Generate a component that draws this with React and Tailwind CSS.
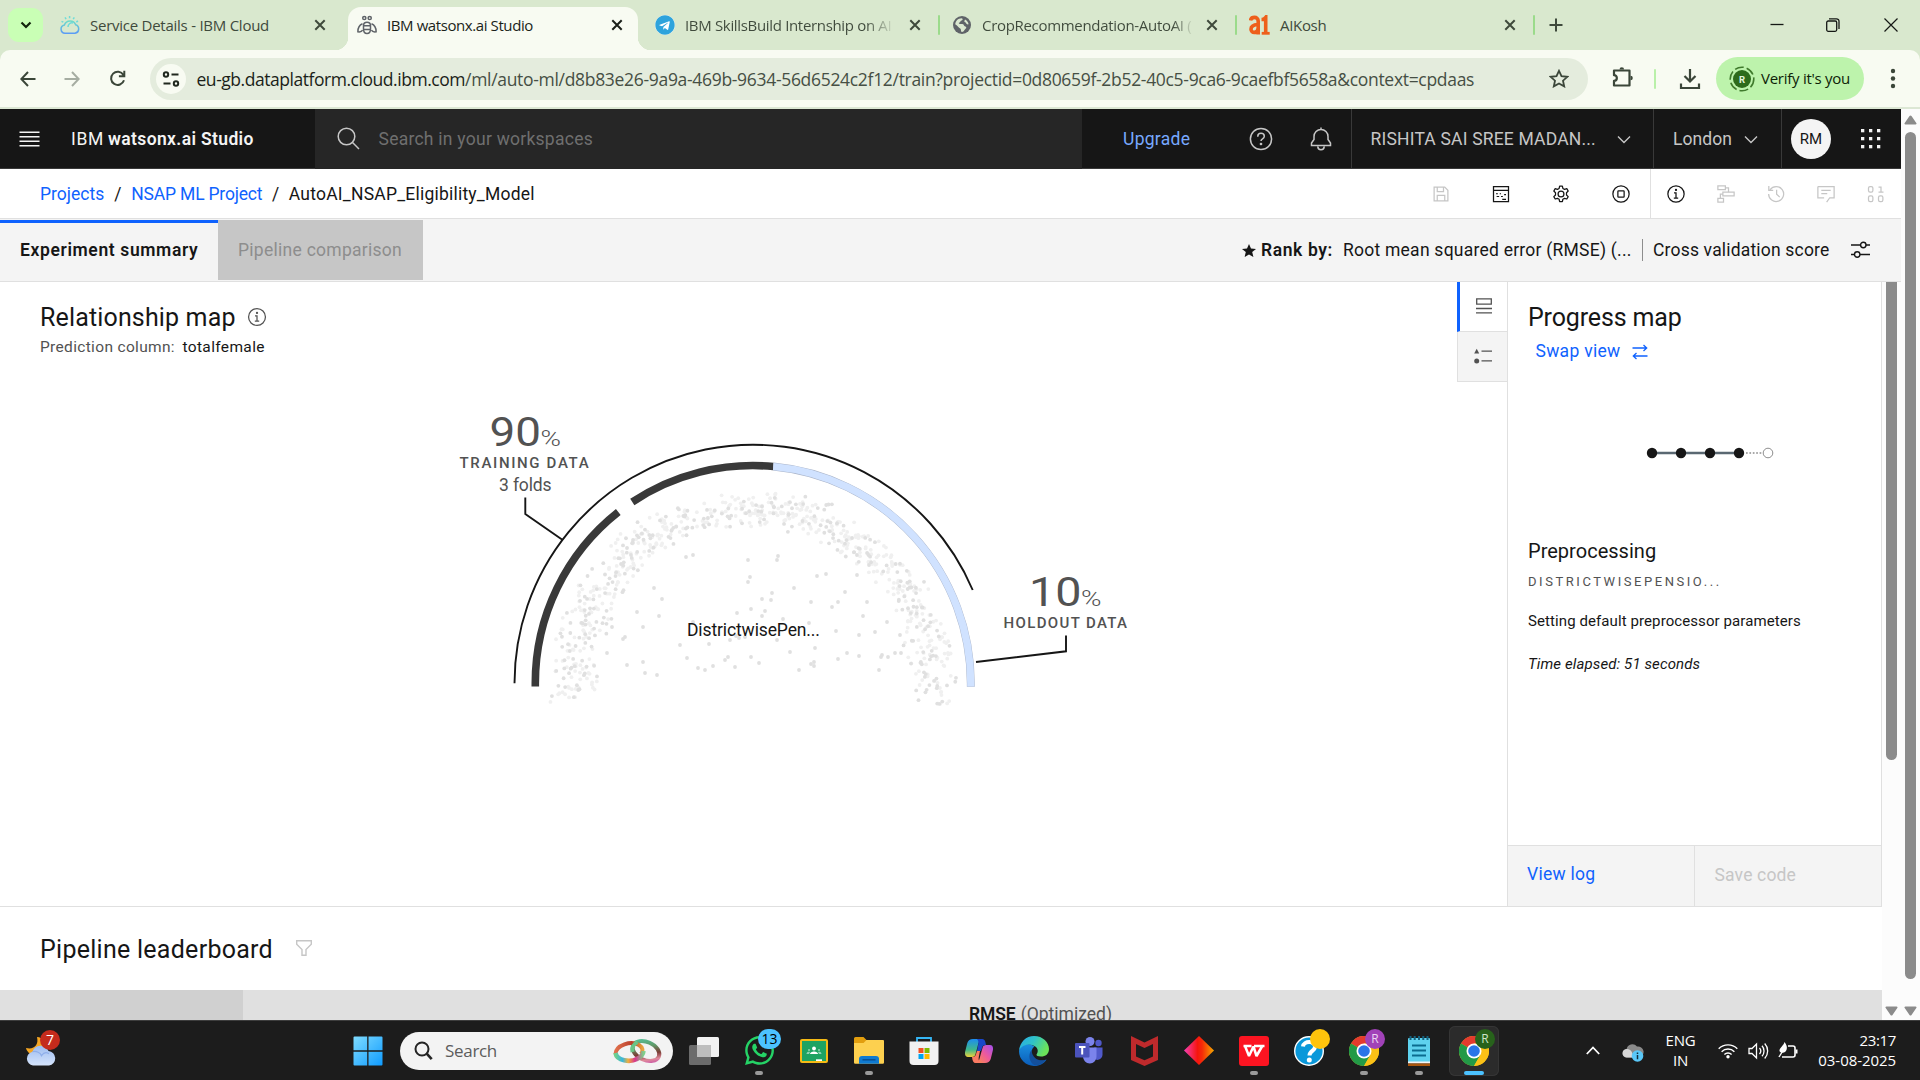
import React from 'react';
import { FaWhatsapp, FaTelegram } from 'react-icons/fa';

const PLEX = "font-['Roboto',sans-serif]";
const SEGOE = "font-['Open_Sans',sans-serif]";

/* ---------- shared helpers ---------- */

function Line({ size = 20, box = 32, w = 2, className = '', children }) {
  return (
    <svg width={size} height={size} viewBox={`0 0 ${box} ${box}`} fill="none" stroke="currentColor" strokeWidth={w} className={`shrink-0 ${className}`}>
      {children}
    </svg>
  );
}

const CloseX = () => (
  <svg width="20" height="20" viewBox="0 0 20 20" stroke="currentColor" strokeWidth="2" className="shrink-0">
    <path d="M5.3 5.3l9.4 9.4M14.7 5.3l-9.4 9.4" />
  </svg>
);

/* ---------- browser chrome ---------- */

const CloudFavicon = () => (
  <svg width="20" height="20" viewBox="0 0 20 20" fill="none" strokeWidth="1.5" className="shrink-0">
    <defs>
      <linearGradient id="cloudfav" x1="0" y1="0" x2="0" y2="1">
        <stop offset="0" stopColor="#6fdcc8" />
        <stop offset="1" stopColor="#5b9cf5" />
      </linearGradient>
    </defs>
    <path d="M5 18.3a4.2 4.2 0 0 1-.6-8.3 6 6 0 0 1 11.3-.2A4.4 4.4 0 0 1 15 18.3z" stroke="url(#cloudfav)" />
    <path d="M9.6 1v2.2M5 2.4l1.1 1.8M14.3 2.4l-1.1 1.8M1.5 6.3l1.8.9M18 6l-1.7 1M8 12a4 4 0 0 1 5-4" stroke="#6fdcd8" />
  </svg>
);

const BeeFavicon = () => (
  <svg width="20" height="20" viewBox="0 0 20 20" fill="none" stroke="#5f6368" strokeWidth="1.5" className="shrink-0">
    <circle cx="7.300" cy="3" r="1.600" />
    <circle cx="12.700" cy="3" r="1.600" />
    <path d="M6.500 10.500C6.500 6 13.500 6 13.500 10.500v3.500c0 6-7 6-7 0z" />
    <path d="M6.500 10.800h7M6.500 14.600h7" />
    <path d="M5.500 8.700C2.500 10 .8 12.500.9 16.800c2 .3 3.900-.2 4.700-1.600M14.500 8.700c3 1.300 4.700 3.800 4.600 8.100-2 .3-3.900-.2-4.700-1.600" />
  </svg>
);

const GlobeFavicon = () => (
  <svg width="18" height="18" viewBox="0 0 18 18" className="shrink-0">
    <circle cx="9" cy="9" r="9" fill="#5f6368" />
    <path d="M8.500 2.200c2 .6 1 2.300-.4 2.500-.9.1-.4 1.500-1.500 1.700C5.200 6.700 5.700 8 7.300 7.900c2-.1 3.600.1 3.700 1.600.1 1.200 2.300.6 2.300 2.100 0 1.200-1.300 1.500-2 2.600-.6 1-1.500 2-2.600 1.700C7.400 15.500 8.600 13.500 7.300 12.500 5.500 11.500 5 10.300 2.200 8.300 2.500 5 5 2.200 8.500 2.200z" fill="#dbe8d0" />
    <path d="M12 3.500c1.800 1 3.300 2.600 3.600 4.800-1.200.3-2.300-.2-2.400-1.100-.1-1-1.800-.9-1.900-2z" fill="#dbe8d0" />
  </svg>
);

const AiFavicon = () => (
  <svg width="21" height="20" viewBox="0 0 21 20" fill="none" stroke="#ee5f1b" strokeWidth="3.600" className="shrink-0">
    <path d="M1.500 5.500C2 1.500 9.200 1 9.200 6v13.500M9 9.500C4 9.800 2 11.500 2 14.200c0 4.300 6.500 4.300 7-.2" />
    <path d="M12.500 4.500c2 0 3-.8 4.200-2.200v15.500" />
    <path d="M12.700 18.300h8" strokeWidth="2.800" />
  </svg>
);

function TabStrip() {
  return (
    <div className={`flex h-[50px] items-center bg-[#d9e8ce] text-[15px] text-[#3f4a3c] ${SEGOE}`}>
      <button className="ml-2 flex h-[34px] w-[35px] items-center justify-center rounded-[11px] bg-[#c9ffb5] text-[#12240c]">
        <svg width="12" height="8" viewBox="0 0 12 8" fill="none" stroke="currentColor" strokeWidth="2.200"><path d="M1.500 1.500L6 6l4.500-4.500" /></svg>
      </button>
      <div className="flex w-[305px] items-center pl-[17px]">
        <CloudFavicon />
        <span className="ml-[10px] w-[220px] whitespace-nowrap tracking-[-0.250px]">Service Details - IBM Cloud</span>
        <CloseX />
      </div>
      <div className="relative mt-[7px] flex h-[43px] w-[290px] items-center rounded-t-[13px] bg-[#f8fbf2] pb-[7px] pl-[9px] text-[#1b1f19]">
        <span className="absolute bottom-0 -left-[13px] size-[13px] bg-[radial-gradient(circle_at_0_0,transparent_13px,#f8fbf2_13.500px)]" />
        <span className="absolute bottom-0 -right-[13px] size-[13px] bg-[radial-gradient(circle_at_100%_0,transparent_13px,#f8fbf2_13.500px)]" />
        <BeeFavicon />
        <span className="ml-[10px] w-[220px] whitespace-nowrap tracking-[-0.410px]">IBM watsonx.ai Studio</span>
        <CloseX />
      </div>
      <div className="flex w-[300px] items-center pl-[17px]">
        <span className="relative flex size-5 items-center justify-center rounded-full bg-white"><FaTelegram className="size-5 text-[#2ea3dc]" /></span>
        <span className="ml-[10px] w-[210px] bg-gradient-to-r from-[#3f4a3c] from-86% to-[#3f4a3c00] bg-clip-text whitespace-nowrap text-transparent tracking-[-0.330px]">IBM SkillsBuild Internship on AI</span>
        <span className="ml-[10px]"><CloseX /></span>
      </div>
      <div className="h-5 w-[2px] rounded bg-[#9bdb8b]" />
      <div className="flex w-[295px] items-center pl-[13px]">
        <GlobeFavicon />
        <span className="ml-[11px] w-[212px] bg-gradient-to-r from-[#3f4a3c] from-90% to-[#3f4a3c00] bg-clip-text whitespace-nowrap text-transparent tracking-[-0.310px]">CropRecommendation-AutoAI (</span>
        <span className="ml-[8px]"><CloseX /></span>
      </div>
      <div className="h-5 w-[2px] rounded bg-[#9bdb8b]" />
      <div className="flex w-[296px] items-center pl-[12px]">
        <AiFavicon />
        <span className="ml-[10px] w-[220px] tracking-[-0.320px]">AIKosh</span>
        <CloseX />
      </div>
      <div className="h-5 w-[2px] rounded bg-[#9bdb8b]" />
      <svg width="14" height="14" viewBox="0 0 14 14" stroke="currentColor" strokeWidth="2" className="ml-[14px]"><path d="M7 .5v13M.5 7h13" /></svg>
      <div className="ml-auto flex items-center pr-[22px] text-[#151815]">
        <svg width="14" height="14" viewBox="0 0 14 14" stroke="currentColor" strokeWidth="1.300"><path d="M0.500 6.500h13" /></svg>
        <svg width="14" height="14" viewBox="0 0 14 14" fill="none" stroke="currentColor" strokeWidth="1.300" className="ml-[42px]"><rect x=".7" y="3" width="10" height="10.300" rx="1.500" /><path d="M3 .8h7.500a2.500 2.500 0 0 1 2.500 2.500V11" /></svg>
        <svg width="14" height="14" viewBox="0 0 14 14" stroke="currentColor" strokeWidth="1.200" className="ml-[44px]"><path d="M.5.5l13 13M13.500.5l-13 13" /></svg>
      </div>
    </div>
  );
}

function AddressBar() {
  return (
    <div className="bg-[#d9e8ce]">
      <div className={`flex h-[59px] items-center rounded-t-[10px] border-b-2 border-[#dce7d4] bg-[#f8fbf2] text-[#3b4639] ${SEGOE}`}>
        <svg width="16" height="16" viewBox="0 0 16 16" fill="none" stroke="currentColor" strokeWidth="2" className="ml-5"><path d="M15.500 8H1.500M8 1L1.300 8 8 15" /></svg>
        <svg width="16" height="16" viewBox="0 0 16 16" fill="none" stroke="#a6ada2" strokeWidth="2" className="ml-[28px]"><path d="M.5 8h14M8 1l6.700 7L8 15" /></svg>
        <svg width="17" height="17" viewBox="0 0 17 17" fill="none" stroke="currentColor" strokeWidth="2" className="ml-[29px]"><path d="M15 10.300A6.600 6.600 0 1 1 14.400 5M15.300.8v5.400H9.900" /></svg>
        <div className="ml-[24px] flex h-[42px] w-[1438px] items-center rounded-full bg-[#e4ecdd] pl-[6px]">
          <span className="flex size-[30px] items-center justify-center rounded-full bg-[#f8fbf2] text-[#20281e]">
            <svg width="18" height="16" viewBox="0 0 18 16" fill="none" stroke="currentColor" strokeWidth="2"><circle cx="4" cy="3.500" r="2.200" /><path d="M9.500 3.500h7M1.500 12.500h7" /><circle cx="14" cy="12.500" r="2.200" /></svg>
          </span>
          <span className="ml-[10.500px] w-[1350px] pt-[2px] text-[17.500px] whitespace-nowrap text-[#464f44]">
            <span className="tracking-[-0.460px] text-[#1b1f19]">eu-gb.dataplatform.cloud.ibm.com</span>
            <span className="tracking-[-0.310px]">/ml/auto-ml/d8b83e26-9a9a-469b-9634-56d6524c2f12/train?projectid=0d80659f-2b52-40c5-9ca6-9caefbf5658a&amp;context=cpdaas</span>
          </span>
          <svg width="20" height="19" viewBox="0 0 20 19" fill="none" stroke="currentColor" strokeWidth="1.800" className="ml-[2px]"><path d="M10 1.800l2.500 5.300 5.800.7-4.300 3.900 1.200 5.700L10 14.500l-5.200 2.900L6 11.700 1.700 7.800l5.800-.7z" /></svg>
        </div>
        <svg width="22" height="22" viewBox="0 0 22 22" fill="none" stroke="currentColor" strokeWidth="2.200" className="-mt-1 ml-[24px]"><path d="M2 4.500h15.500v15H2v-4.700c3.800 0 3.800-5.600 0-5.600z" strokeLinejoin="round" /><path d="M7.500 3.500a2.300 2.300 0 0 1 4.600 0zM18.500 9.700a2.300 2.300 0 0 1 0 4.600z" fill="currentColor" stroke="none" /></svg>
        <div className="ml-[20px] h-5 w-[2px] rounded bg-[#b9f0a9]" />
        <svg width="22" height="22" viewBox="0 0 22 22" fill="none" stroke="currentColor" strokeWidth="2.200" className="ml-[23px]"><path d="M11 1v12M5.500 8l5.500 5.500L16.500 8M2 15.500V20h18v-4.500" /></svg>
        <div className="ml-[15px] flex h-[43px] w-[148px] items-center rounded-full bg-[#bdf3ac] pl-[12px] text-[15px] text-[#0d2207]">
          <svg width="28" height="28" viewBox="0 0 28 28"><circle cx="14" cy="14" r="11.800" fill="none" stroke="#3f7a2c" strokeWidth="1.600" strokeDasharray="9 3" /><circle cx="14" cy="14" r="9" fill="#2d6b1b" /><text x="14" y="17.500" textAnchor="middle" fontSize="9.500" fontWeight="700" fill="#e2f3db" fontFamily="Roboto">R</text></svg>
          <span className="ml-[5px] whitespace-nowrap tracking-[-0.260px]">Verify it's you</span>
        </div>
        <svg width="6" height="22" viewBox="0 0 6 22" fill="currentColor" className="ml-[26px]"><circle cx="3" cy="3" r="2.200" /><circle cx="3" cy="10.500" r="2.200" /><circle cx="3" cy="18" r="2.200" /></svg>
      </div>
    </div>
  );
}

/* ---------- IBM header ---------- */

const ChevronDown = () => (
  <svg width="14" height="9" viewBox="0 0 14 9" fill="none" stroke="currentColor" strokeWidth="1.400" className="shrink-0"><path d="M1 1.500l6 6 6-6" /></svg>
);

function Header() {
  return (
    <div className="flex h-[60px] items-stretch bg-[#161616] text-[17.500px] text-[#c6c6c6]">
      <div className="flex w-[315px] items-center border-b border-[#393939] pt-px pl-[19px] text-[#f4f4f4]">
        <svg width="21" height="16" viewBox="0 0 21 16" stroke="currentColor" strokeWidth="1.400"><path d="M.5 1.200h20M.5 5.700h20M.5 10.200h20M.5 14.700h20" /></svg>
        <span className="ml-[31px] pt-px tracking-[0.700px]">IBM</span>
        <span className="ml-[4px] pt-px font-semibold tracking-[0.360px]">watsonx.ai Studio</span>
      </div>
      <div className="flex w-[767px] items-center bg-[#262626] pl-[22px]">
        <svg width="23" height="23" viewBox="0 0 23 23" fill="none" stroke="currentColor" strokeWidth="1.500" className="-mt-[2px]"><circle cx="9.500" cy="9.500" r="8.300" /><path d="M15.300 15.300l6.700 6.700" /></svg>
        <span className="ml-[18.500px] tracking-[0.250px] text-[#6f6f6f]">Search in your workspaces</span>
      </div>
      <div className="flex w-[270px] items-center border-r border-b border-[#393939]">
        <span className="ml-[41px] w-[68px] pt-[2px] tracking-[0.280px] text-[#78a9ff]">Upgrade</span>
        <svg width="24" height="24" viewBox="0 0 24 24" fill="none" stroke="currentColor" strokeWidth="1.500" className="ml-[57.500px]"><circle cx="12" cy="12" r="10.600" /><path d="M8.800 9.800V9.300c0-1.700 1.200-3 3.200-3s3.300 1.100 3.300 2.900c0 2.800-3.300 2.300-3.300 4.800" /><circle cx="12" cy="17" r=".6" fill="currentColor" /></svg>
        <svg width="22" height="24" viewBox="0 0 22 24" fill="none" stroke="currentColor" strokeWidth="1.500" className="ml-[37px]"><path d="M11 .5v2.500M1.500 18.500h19V16l-2.500-3.500V9.500a7 7 0 0 0-14 0v3L1.500 16zM7.800 19.500a3.200 3.200 0 0 0 6.400 0" /></svg>
      </div>
      <div className="flex w-[302px] items-center border-r border-b border-[#393939] pt-[2px] pl-[18.500px]">
        <span className="w-[246px] whitespace-nowrap tracking-[0.190px]">RISHITA SAI SREE MADAN...</span>
        <ChevronDown />
      </div>
      <div className="flex w-[128px] items-center border-r border-b border-[#393939] pt-[2px] pl-[19px]">
        <span className="w-[71px] tracking-[0.060px]">London</span>
        <ChevronDown />
      </div>
      <div className="flex w-[119px] items-center border-b border-[#393939] pl-[9px]">
        <span className="flex size-10 items-center justify-center rounded-full bg-[#f4f4f4] pt-px text-[15px] text-[#161616]">RM</span>
        <svg width="20" height="20" viewBox="0 0 20 20" fill="#f4f4f4" className="ml-[30px]">
          {[0, 8, 16].map((y) => [0, 8, 16].map((x) => <rect key={`${x}-${y}`} x={x} y={y} width="3.300" height="3.300" />))}
        </svg>
      </div>
    </div>
  );
}

/* ---------- breadcrumb ---------- */

function ToolCell({ wide, dim, children }) {
  return (
    <span className={`flex h-full items-center justify-center ${wide ? 'w-[60px] pl-[2px]' : 'w-[50px]'} ${dim ? 'text-[#c6c6c6]' : 'text-[#161616]'}`}>
      {children}
    </span>
  );
}

function Breadcrumb() {
  return (
    <div className="flex h-[50px] items-center border-b border-[#e0e0e0] bg-white pl-10 text-[17.500px] text-[#161616]">
      <div className="flex pt-[2px]">
        <span className="tracking-[0.020px] text-[#0f62fe]">Projects</span>
        <span className="w-[27px] text-center">/</span>
        <span className="tracking-[-0.190px] text-[#0f62fe]">NSAP ML Project</span>
        <span className="w-[26.500px] text-center">/</span>
        <span className="tracking-[0.220px]">AutoAI_NSAP_Eligibility_Model</span>
      </div>
      <div className="ml-auto flex h-full items-center pt-px">
        <ToolCell wide dim>
          <Line><path d="M5 5h17l5 5v17H5zM10 5v7h10V5M10 27v-9h12v9" /></Line>
        </ToolCell>
        <ToolCell wide>
          <Line><path d="M4 4h24v24H4zM4 10h24" /><path d="M8 15.500h3M14 15.500h2M9 20h4M16 20h3M18 24.500h6M21 17h3" strokeWidth="1.800" /></Line>
        </ToolCell>
        <ToolCell wide>
          <Line>
            <circle cx="16" cy="16" r="4.700" />
            <path d="M13.800 3.500h4.400l.8 3.600 2.700 1.500 3.600-1.100 2.200 3.800-2.700 2.600v3.700l2.700 2.600-2.200 3.800-3.600-1.100-2.700 1.500-.8 3.600h-4.400l-.8-3.600-2.700-1.500-3.600 1.100-2.200-3.800 2.700-2.600v-3.700l-2.700-2.600 2.200-3.800 3.600 1.100L13 7.100z" strokeLinejoin="round" />
          </Line>
        </ToolCell>
        <ToolCell wide>
          <Line><circle cx="16" cy="16" r="13" /><rect x="11" y="11" width="10" height="10" rx="1" /></Line>
        </ToolCell>
        <span className="-mt-px h-[50px] w-px bg-[#e0e0e0]" />
        <ToolCell>
          <Line><circle cx="16" cy="16" r="13" /><path d="M12.500 22.500h7M16 22.500v-8.300h-3.200" /><circle cx="16" cy="9.500" r=".8" fill="currentColor" /></Line>
        </ToolCell>
        <ToolCell dim>
          <Line><rect x="3" y="3" width="12" height="6" /><rect x="11" y="13" width="18" height="6" /><rect x="3" y="23" width="9" height="6" /><path d="M15 6h5v7M7 23v-7h4" /></Line>
        </ToolCell>
        <ToolCell dim>
          <Line><path d="M6.500 9a12 12 0 1 1-2.300 7M4.500 3v7h7M17 9v7.500l5 4.500" /></Line>
        </ToolCell>
        <ToolCell dim>
          <Line><path d="M3 4h26v18h-7l-5 7M3 4v18h10M8.500 10h15M8.500 15.500h9.500" /></Line>
        </ToolCell>
        <ToolCell dim>
          <Line><rect x="4" y="4" width="7" height="9" rx="2.500" /><path d="M20 5h4v8M20 13h8" /><rect x="4" y="19" width="7" height="9" rx="2.500" /><rect x="20" y="19" width="7" height="9" rx="2.500" /></Line>
        </ToolCell>
      </div>
    </div>
  );
}

function ViewTabs() {
  return (
    <div className="flex h-[63px] items-center border-b border-[#e0e0e0] bg-[#f4f4f4] text-[17.500px] text-[#161616]">
      <div className="mt-px flex h-[60px] w-[218px] items-center self-start border-t-[3px] border-[#0f62fe] pb-[3px] pl-5 font-semibold tracking-[0.620px]">Experiment summary</div>
      <div className="mt-px flex h-[60px] w-[204.500px] items-center self-start bg-[#c6c6c6] pl-5 tracking-[0.270px] text-[#8d8d8d]">Pipeline comparison</div>
      <div className="ml-auto flex items-center whitespace-nowrap pr-[31.500px]">
        <svg width="14" height="13" viewBox="0 0 14 13" fill="#161616"><path d="M7 0l2 4.500 5 .4-3.800 3.200L11.400 13 7 10.400 2.600 13l1.200-4.900L0 4.900l5-.4z" /></svg>
        <span className="ml-[5px] w-[82px] font-semibold tracking-[0.600px]">Rank by:</span>
        <span className="w-[299px] tracking-[0.240px]">Root mean squared error (RMSE) (...</span>
        <span className="h-[22px] w-px bg-[#8d8d8d]" />
        <span className="ml-[10px] w-[197.500px] tracking-[0.180px]">Cross validation score</span>
        <svg width="19" height="18" viewBox="0 0 19 18" fill="none" stroke="currentColor" strokeWidth="1.400"><path d="M0 4h9.500M15 4h4M0 13.500h3.500M9 13.500h10" /><circle cx="12.300" cy="4" r="2.700" /><circle cx="6.200" cy="13.500" r="2.700" /></svg>
      </div>
    </div>
  );
}

/* ---------- relationship map ---------- */

function seeded(seed) {
  let s = seed;
  return () => {
    s = (s + 0x6d2b79f5) | 0;
    let t = Math.imul(s ^ (s >>> 15), 1 | s);
    t = (t + Math.imul(t ^ (t >>> 7), 61 | t)) ^ t;
    return ((t ^ (t >>> 14)) >>> 0) / 4294967296;
  };
}

const CX = 753;
const CY = 683.3;

/* Dots fill a half ring that widens towards both feet of the arc. */
function bandDots(count, seed) {
  const rnd = seeded(seed);
  return Array.from({ length: count }, () => {
    const a = Math.PI * (1.035 - rnd() * 1.07);
    const edge = Math.abs(Math.cos(a));
    const outer = 193 + 13 * edge;
    const inner = 155 - 2 * edge;
    const r = inner + (outer - inner) * (rnd() * 0.6 + rnd() * 0.4);
    return [CX + r * Math.cos(a), CY - r * Math.sin(a)];
  });
}

const LIGHT = bandDots(470, 17);
const MID = bandDots(270, 93);

const INNER = [
  [686, 557], [693, 555], [748, 560], [778, 556], [777, 560], [750, 577], [748, 582], [654, 588], [662, 599], [772, 593], [762, 599], [771, 600],
  [751, 609], [765, 611], [762, 616], [737, 613], [659, 616], [637, 612], [693, 622], [783, 619], [643, 627], [680, 645], [709, 644], [687, 658],
  [725, 660], [728, 657], [751, 657], [759, 663], [735, 667], [713, 666], [705, 670], [698, 668], [657, 675], [645, 673], [643, 662], [627, 665],
  [607, 653], [623, 639], [625, 637], [612, 627], [794, 588], [817, 576], [826, 574], [811, 602], [832, 607], [809, 623], [815, 648], [790, 652],
  [777, 640], [799, 670], [811, 664], [814, 662], [814, 666], [730, 640], [736, 636], [739, 638], [745, 637], [845, 592], [838, 602], [867, 602],
  [863, 616], [857, 575], [869, 565], [836, 631], [859, 635], [875, 632], [887, 622], [900, 635], [838, 659], [847, 653], [859, 656], [882, 655],
  [881, 657], [888, 657], [895, 653], [901, 653], [879, 670],
];

function RelationshipChart() {
  return (
    <svg width="1457" height="350" viewBox="0 390 1457 350" className={`block ${PLEX}`} fill="#525252">
      <g fill="#f0f0f0">{LIGHT.map(([x, y], i) => <circle key={i} cx={x} cy={y} r="1.900" />)}</g>
      <g fill="#e0e0e0">{MID.map(([x, y], i) => <circle key={i} cx={x} cy={y} r="1.900" />)}</g>
      <g fill="#e0e0e0">{INNER.map(([x, y], i) => <circle key={i} cx={x} cy={y} r="1.900" />)}</g>
      <g fill="none">
        <path d="M514.500 683.300A238.600 238.600 0 0 1 972.700 590" stroke="#161616" strokeWidth="1.900" />
        <path d="M535.300 686.500V683.300A217.800 217.800 0 0 1 618.300 512" stroke="#393939" strokeWidth="7.600" />
        <path d="M632.300 502A217.800 217.800 0 0 1 773.300 466.500" stroke="#393939" strokeWidth="7.600" />
        <path d="M773.300 466.500A217.800 217.800 0 0 1 970.800 683.300V686.800" stroke="#a9b4c9" strokeWidth="7.900" />
        <path d="M773.300 466.500A217.800 217.800 0 0 1 970.800 683.300V686.500" stroke="#d0e2ff" strokeWidth="7.200" />
        <path d="M525.300 497.500V514L562.700 540" stroke="#161616" strokeWidth="1.900" />
        <path d="M1066 635.500V651.300L976 662" stroke="#161616" strokeWidth="1.900" />
      </g>
      <text x="489.500" y="446" fontSize="41.500" textLength="51.500" lengthAdjust="spacingAndGlyphs">90</text>
      <text x="540.500" y="446" fontSize="21.500" fontWeight="300" textLength="20.500" lengthAdjust="spacingAndGlyphs">%</text>
      <text x="459.500" y="468.300" fontSize="15" fontWeight="500" letterSpacing="1.650">TRAINING DATA</text>
      <text x="499" y="490.700" fontSize="17.500" letterSpacing="-0.150">3 folds</text>
      <text x="687" y="636" fontSize="17.500" letterSpacing="-0.120" fill="#161616">DistrictwisePen...</text>
      <text x="1029" y="605.700" fontSize="41.500" textLength="52.500" lengthAdjust="spacingAndGlyphs">10</text>
      <text x="1081" y="605.700" fontSize="21.500" fontWeight="300" textLength="20.500" lengthAdjust="spacingAndGlyphs">%</text>
      <text x="1003.500" y="628.300" fontSize="15" fontWeight="500" letterSpacing="1.360">HOLDOUT DATA</text>
    </svg>
  );
}

function RelationshipPanel() {
  return (
    <div className="w-[1457px]">
      <div className="flex h-[70px] items-center pt-[2px] pl-10 text-[25px] tracking-[0.150px] text-[#161616]">
        Relationship map
        <Line size={20} w={2} className="-mt-[2px] ml-[11px] text-[#525252]"><circle cx="16" cy="16" r="13.500" /><path d="M12.500 22.500h7M16 22.500v-8.300h-3.200" /><circle cx="16" cy="9.500" r=".8" fill="currentColor" /></Line>
      </div>
      <div className="-mt-[14px] mb-[32px] flex h-5 items-center pl-10 text-[15.500px]">
        <span className="tracking-[0.330px] text-[#525252]">Prediction column:</span>
        <span className="ml-[7.500px] tracking-[0.360px] text-[#161616]">totalfemale</span>
      </div>
      <RelationshipChart />
    </div>
  );
}

function SideTabs() {
  return (
    <div className="flex w-[50px] flex-col">
      <div className="flex h-[50px] items-center justify-center border-b border-l-[3px] border-[#e0e0e0] border-l-[#0f62fe] pb-[2px] pl-px text-[#525252]">
        <svg width="16" height="16" viewBox="0 0 16 16" fill="none" stroke="currentColor" strokeWidth="1.300"><path d="M.7.9h14.600v5.200H.7zM0 10.500h16M0 14.800h16" /></svg>
      </div>
      <div className="flex h-[50px] items-center justify-center border-b border-l border-[#e0e0e0] bg-[#f4f4f4] pb-px pl-px text-[#525252]">
        <svg width="18" height="16" viewBox="0 0 18 16" fill="currentColor"><path d="M2.700.7L5.200 5.500H.2z" /><circle cx="2.700" cy="13" r="2.500" /><path d="M7.500 2.500H18v1.300H7.500zM7.500 12.300H18v1.300H7.500z" /></svg>
      </div>
    </div>
  );
}

function ProgressPanel() {
  return (
    <div className="flex w-[375px] flex-col border-x border-[#e0e0e0] text-[#161616]">
      <div className="flex flex-1 flex-col pl-5">
        <div className="mt-[21px] h-[30px] text-[25px] leading-[30px] tracking-[-0.150px]">Progress map</div>
        <div className="mt-[6px] flex h-6 items-center pl-[7.500px] text-[17.500px] text-[#0f62fe]">
          <span className="w-[96px] tracking-[0.290px]">Swap view</span>
          <svg width="16" height="16" viewBox="0 0 16 16" fill="none" stroke="currentColor" strokeWidth="1.300" className="mt-[2px]"><path d="M.5 4h14M11.500 1l3.200 3-3.200 3M15.500 12h-14M4.500 9l-3.200 3 3.200 3" /></svg>
        </div>
        <svg width="130" height="12" viewBox="0 0 130 12" className="mt-[84px] ml-[118px]">
          <path d="M7 6h87" stroke="#5a6872" strokeWidth="2.600" />
          <path d="M100 6h17" stroke="#8d8d8d" strokeWidth="1.600" strokeDasharray="1.700 1.700" />
          {[6, 35, 64, 93].map((x) => <circle key={x} cx={x} cy="6" r="5.200" fill="#161616" />)}
          <circle cx="122" cy="6" r="4.800" fill="#fff" stroke="#8d8d8d" strokeWidth="1" />
        </svg>
        <div className="mt-[79px] h-[26px] text-[20px] leading-[26px] tracking-[0.020px]">Preprocessing</div>
        <div className="mt-[8px] h-5 text-[13px] leading-5 tracking-[2.550px] text-[#525252]">DISTRICTWISEPENSIO...</div>
        <div className="mt-[19px] h-5 text-[15px] leading-5 tracking-[0.090px]">Setting default preprocessor parameters</div>
        <div className="mt-[23px] h-5 text-[15px] leading-5 tracking-[0.120px] italic">Time elapsed: 51 seconds</div>
      </div>
      <div className="flex h-[61px] border-t border-[#e0e0e0] bg-[#f4f4f4] text-[17.500px]">
        <div className="flex w-[187px] items-center border-r border-[#e0e0e0] pb-[3px] pl-[19px] tracking-[0.260px] text-[#0f62fe]">View log</div>
        <div className="flex flex-1 items-center pb-[1px] pl-[19.500px] tracking-[0.160px] text-[#c6c6c6]">Save code</div>
      </div>
    </div>
  );
}

function Leaderboard() {
  return (
    <div>
      <div className="flex h-[83px] items-center pt-[2px] pl-10 text-[25px] tracking-[0.270px] text-[#161616]">
        Pipeline leaderboard
        <svg width="16" height="16" viewBox="0 0 16 16" fill="none" stroke="#c6c6c6" strokeWidth="1.400" className="-mt-[3px] ml-[23px]"><path d="M.7.7h14.600v3.600L10 9.500v5.800H6V9.500L.7 4.300z" /></svg>
      </div>
      <div className="flex h-[30px] overflow-hidden bg-[#e0e0e0] text-[17.500px]">
        <div className="ml-[70px] w-[173px] bg-[#d0d0d0]" />
        <div className="mt-[14px] ml-[726px] leading-5 whitespace-nowrap">
          <span className="font-semibold tracking-[-0.080px] text-[#161616]">RMSE</span>
          <span className="ml-[5px] tracking-[0.020px] text-[#525252]">(Optimized)</span>
        </div>
      </div>
    </div>
  );
}

const ArrowDown = () => <svg width="13" height="10" viewBox="0 0 13 10" fill="#8b8b8b"><path d="M1.500.5h10c1 0 1.300.8.8 1.500L7.500 9c-.6.7-1.400.7-2 0L.7 2C.2 1.300.5.5 1.500.5z" /></svg>;
const ArrowUp = () => <svg width="13" height="10" viewBox="0 0 13 10" fill="#8b8b8b"><path d="M1.500 9.500h10c1 0 1.300-.8.8-1.500L7.500 1c-.6-.7-1.400-.7-2 0L.7 8c-.5.7-.2 1.500.8 1.500z" /></svg>;

/* ---------- taskbar ---------- */

function Badge({ className, children }) {
  return <span className={`absolute flex items-center justify-center rounded-full ${className}`}>{children}</span>;
}

const ChromeIcon = () => (
  <svg width="30" height="30" viewBox="0 0 30 30">
    <circle cx="15" cy="15" r="15" fill="#fbc116" />
    <path d="M15 15L2 7.500A15 15 0 0 1 28 7.500H15z" fill="#e33b2e" />
    <path d="M15 15L2 7.500A15 15 0 0 0 15 30l6.500-11.200z" fill="#229a47" />
    <path d="M15 7.500h13A15 15 0 0 1 15 30l6.500-11.200z" fill="#fbc116" />
    <circle cx="15" cy="15" r="7.500" fill="#fff" />
    <circle cx="15" cy="15" r="5.800" fill="#2a75e8" />
  </svg>
);

function TaskItem({ dot, active, children }) {
  return (
    <div className={`relative mx-[2.500px] flex size-[50px] items-center justify-center rounded-md ${active ? 'bg-[#2b2b2b] ring-1 ring-[#353535] ring-inset' : ''}`}>
      {children}
      {dot && <span className="absolute bottom-[1px] left-[21px] h-1 w-2 rounded-full bg-[#9a9a9a]" />}
      {active && <span className="absolute bottom-[1px] left-[15px] h-1 w-5 rounded-full bg-[#4cc2ff]" />}
    </div>
  );
}

function KnotArt() {
  return (
    <svg width="50" height="28" viewBox="0 0 50 28" fill="none">
      <defs>
        <linearGradient id="knotTop" x1="0" y1="0" x2="1" y2="0">
          <stop offset="0" stopColor="#e0704c" /><stop offset=".6" stopColor="#b93f2c" /><stop offset="1" stopColor="#e9a23e" />
        </linearGradient>
        <linearGradient id="knotLow" x1="0" y1="0" x2="1" y2="0">
          <stop offset="0" stopColor="#6fd08c" /><stop offset=".25" stopColor="#38b6dd" /><stop offset=".45" stopColor="#f0b03c" /><stop offset=".7" stopColor="#d8348c" /><stop offset="1" stopColor="#7fcf8a" />
        </linearGradient>
        <linearGradient id="knotRight" x1="0" y1="0" x2="1" y2="1">
          <stop offset="0" stopColor="#54c8a4" /><stop offset=".35" stopColor="#5f9a68" /><stop offset=".6" stopColor="#7a3c34" /><stop offset=".8" stopColor="#e08a9b" /><stop offset="1" stopColor="#c03fae" />
        </linearGradient>
      </defs>
      <ellipse cx="33" cy="14" rx="14" ry="9" transform="rotate(24 33 14)" stroke="url(#knotRight)" strokeWidth="4" />
      <path d="M2.500 17C3 8 18 3.500 26 8c4 2.500 4.500 6 2 9" stroke="url(#knotTop)" strokeWidth="4" />
      <path d="M2.500 16C4 24 17 25.500 24 22c4-2 6-4 6.500-8" stroke="url(#knotLow)" strokeWidth="4.600" />
      <path d="M19.500 15c-1-4 1-8 5-10" stroke="#6ac487" strokeWidth="4" />
    </svg>
  );
}

function Taskbar() {
  return (
    <div className={`flex h-[60px] items-center border-t border-[#3d3d3d] bg-[#1c1c1c] text-[15px] text-white ${SEGOE}`}>
      <div className="relative ml-[26px] h-[30px] w-[40px]">
        <svg width="30" height="30" viewBox="0 0 30 30">
          <defs><linearGradient id="wx" x1="0" y1="0" x2="0" y2="1"><stop offset="0" stopColor="#9dbcf0" /><stop offset="1" stopColor="#d5e4fb" /></linearGradient></defs>
          <path d="M11 1c2 8-3 13-11 11 2 8 12 10 18 3V6c-1-3-4-5-7-5z" fill="#f5a623" />
          <path d="M7 29.500a7 7 0 0 1-.5-13.800A8.500 8.500 0 0 1 22.500 15 7.300 7.300 0 0 1 23 29.500z" fill="url(#wx)" />
          <path d="M6.500 15.700c4-1 8 1 9 4 2-3 5-3.500 7.500-2" fill="none" stroke="#8eaeea" strokeWidth="1.200" />
        </svg>
        <Badge className="-top-[6px] left-[14px] size-5 bg-[#c42b1c] text-[14px]">7</Badge>
      </div>
      <svg width="30" height="30" viewBox="0 0 30 30" className="ml-[286.500px]">
        <defs><linearGradient id="win" x1="0" y1="0" x2="1" y2="1"><stop offset="0" stopColor="#7fdcff" /><stop offset="1" stopColor="#0f9bff" /></linearGradient></defs>
        <path d="M.5 1.500a1 1 0 0 1 1-1h12.700v13.700H.5zM15.500.5h13a1 1 0 0 1 1 1v12.700h-14zM.5 15.700h13.700v13.800H1.500a1 1 0 0 1-1-1zM15.500 15.700h14v12.800a1 1 0 0 1-1 1h-13z" fill="url(#win)" />
      </svg>
      <div className="ml-[17.500px] flex h-[38px] w-[273px] items-center rounded-full bg-[#f3f3f3] pl-[14px] text-[#5c5c5c]">
        <svg width="19" height="20" viewBox="0 0 19 20" fill="none" stroke="#242424" strokeWidth="2"><circle cx="8" cy="8" r="6.500" /><path d="M12.700 12.700l5 5.500" strokeWidth="2.600" /></svg>
        <span className="ml-[12px] text-[17px] tracking-[-0.310px]">Search</span>
        <span className="ml-auto pr-[10px]"><KnotArt /></span>
      </div>
      <div className="ml-[3.500px] flex items-center">
        <TaskItem>
          <svg width="30" height="28" viewBox="0 0 30 28"><rect y="8" width="22" height="20" rx="1.500" fill="#6b6b6b" /><rect x="8" width="22" height="20" rx="1.500" fill="#f2f2f2" /><path d="M8 8h14v12H9.500A1.500 1.500 0 0 1 8 18.500z" fill="#bdbdbd" /></svg>
        </TaskItem>
        <TaskItem dot>
          <FaWhatsapp className="size-[33px] text-[#25d366]" />
          <Badge className="top-[3px] left-[24px] h-5 w-[23px] bg-[#4cc2ff] text-[14px] text-black">13</Badge>
        </TaskItem>
        <TaskItem>
          <svg width="28" height="24" viewBox="0 0 28 24"><rect width="28" height="24" rx="2" fill="#f5ba15" /><rect x="2" y="2" width="24" height="20" fill="#1da362" /><circle cx="14" cy="9.500" r="1.900" fill="#fff" /><path d="M10 15c0-3.500 8-3.500 8 0z" fill="#fff" /><path d="M6.500 15c0-2.500 2.500-2.500 3.500-2l-1 2zM21.500 15c0-2.500-2.500-2.500-3.500-2l1 2z" fill="#8fd3b3" /><circle cx="9" cy="11" r="1" fill="#8fd3b3" /><circle cx="19" cy="11" r="1" fill="#8fd3b3" /><path d="M16 20.300h6v1.700h-6z" fill="#fff" /></svg>
        </TaskItem>
        <TaskItem dot>
          <svg width="30" height="27" viewBox="0 0 30 27"><path d="M0 1.500A1.500 1.500 0 0 1 1.500 0h8l3 3H29v10H0z" fill="#e29e0e" /><path d="M0 6h9.500l3-3H29a1 1 0 0 1 1 1v21.500a1.200 1.200 0 0 1-1.200 1.200H1.200A1.200 1.200 0 0 1 0 25.500z" fill="#fdd04f" /><path d="M5 22a3 3 0 0 1 3-3h14a3 3 0 0 1 3 3v4.700H5z" fill="#0f7ad1" /><path d="M8.500 22.800h13" stroke="#0a4f92" strokeWidth="1.500" /></svg>
        </TaskItem>
        <TaskItem>
          <svg width="30" height="30" viewBox="0 0 30 30"><path d="M8 8V2h14v6" fill="none" stroke="#35b6f5" strokeWidth="1.800" /><path d="M.5 5.500h29v19.500a4 4 0 0 1-4 4h-21a4 4 0 0 1-4-4z" fill="#f1f1f1" /><path d="M9.500 12h5v5h-5z" fill="#f25022" /><path d="M15.500 12h5v5h-5z" fill="#7fba00" /><path d="M9.500 18h5v5h-5z" fill="#00a4ef" /><path d="M15.500 18h5v5h-5z" fill="#ffb900" /></svg>
        </TaskItem>
        <TaskItem>
          <svg width="28" height="26" viewBox="0 0 28 26">
            <defs>
              <linearGradient id="cpA" x1="0" y1="0" x2="0" y2="1"><stop offset="0" stopColor="#1c8df0" /><stop offset=".6" stopColor="#3fb98a" /><stop offset="1" stopColor="#f0d13a" /></linearGradient>
              <linearGradient id="cpB" x1="1" y1="0" x2="0" y2="1"><stop offset="0" stopColor="#a34ff0" /><stop offset=".5" stopColor="#ee5a9b" /><stop offset="1" stopColor="#fa8f45" /></linearGradient>
            </defs>
            <path d="M8 1h9c-3 1-3.500 4-4.500 8l-2 7c-.6 2.300-1.500 3-3.500 3H3c-3 0-3.500-3-2.700-6l2-8C3.200 2.500 5 1 8 1z" fill="url(#cpA)" />
            <path d="M20 25h-9c3-1 3.500-4 4.500-8l2-7c.6-2.300 1.500-3 3.500-3h4c3 0 3.500 3 2.700 6l-2 8c-.9 2.500-2.700 4-5.700 4z" fill="url(#cpB)" />
            <path d="M12 1h5.500c2 0 3 2 3.500 6-3 0-3.500 1-4 3l-1 3h-4l1-5c.6-3 1-5-1-7z" fill="#1a47c9" />
            <path d="M16 25h-5.500c-2 0-3-2-3.500-6 3 0 3.500-1 4-3l1-3h3l-1 5c-.6 3-.6 5 2 7z" fill="#fa7a62" />
          </svg>
        </TaskItem>
        <TaskItem>
          <svg width="30" height="30" viewBox="0 0 30 30">
            <defs>
              <linearGradient id="edA" x1="0" y1="0" x2="1" y2=".4"><stop offset="0" stopColor="#2aa9e8" /><stop offset=".5" stopColor="#2fc2c8" /><stop offset="1" stopColor="#6be35a" /></linearGradient>
              <linearGradient id="edB" x1="0" y1="0" x2="0" y2="1"><stop offset="0" stopColor="#1a8fe0" /><stop offset="1" stopColor="#0b5cb8" /></linearGradient>
            </defs>
            <path d="M0 15a15 15 0 0 0 15 15c6 0 10-2.500 12.500-6.500-6 3-15 1-15-7 0-4 3-6 3-6C8 5 1 9 0 15z" fill="url(#edB)" />
            <path d="M0 14.500C1 6 7 0 15 0c9 0 15 6.500 15 13 0 5-3.500 7.500-8 7.500-3 0-5-1-4.500-2 1.500-2 2-5-.5-7.500C12 6.500 3 8 0 14.500z" fill="url(#edA)" />
            <path d="M12.500 14c-4 5-2 13 3.500 15.500 5-.3 9-2.500 11.500-6C21 26 13 23 12.500 14z" fill="#134f9c" />
          </svg>
        </TaskItem>
        <TaskItem>
          <svg width="28" height="27" viewBox="0 0 28 27"><circle cx="23.500" cy="6" r="3.200" fill="#5059c9" /><circle cx="15" cy="4.500" r="4.500" fill="#7b83eb" /><path d="M19 10.500h8.500V18a5 5 0 0 1-7 4.500z" fill="#5059c9" /><path d="M8 10.500h13.500V19c0 4.500-3 7.500-6.700 7.500S8 23.500 8 19z" fill="#7b83eb" /><rect y="6" width="14.500" height="14.500" rx="1" fill="#4b53bc" /><path d="M4 10h6.500M7.200 10v7.500" stroke="#fff" strokeWidth="2" /></svg>
        </TaskItem>
        <TaskItem>
          <svg width="27" height="30" viewBox="0 0 27 30"><path d="M0 0l13.500 6.500L27 0v24l-13.500 6L0 24zM5 8v12.500l8.500 3.800 8.500-3.800V8l-8.500 4z" fill="#bf2a2c" fillRule="evenodd" /></svg>
        </TaskItem>
        <TaskItem>
          <svg width="30" height="29" viewBox="0 0 30 29"><defs><linearGradient id="dia"><stop offset="0" stopColor="#f53fb5" /><stop offset=".45" stopColor="#f5150e" /><stop offset=".6" stopColor="#f52a08" /><stop offset="1" stopColor="#f5a800" /></linearGradient></defs><path d="M15 0l15 14.500L15 29 0 14.500z" fill="url(#dia)" /></svg>
        </TaskItem>
        <TaskItem dot>
          <svg width="30" height="30" viewBox="0 0 30 30" fill="none"><rect width="30" height="30" rx="3" fill="#fc1421" /><path d="M4.500 10h8M6 10l4 10 4.500-9.500 3 9.500 5.500-9.500M15 10h10.500" stroke="#fff" strokeWidth="2.500" strokeLinejoin="bevel" /></svg>
        </TaskItem>
        <TaskItem>
          <svg width="30" height="30" viewBox="0 0 30 30"><circle cx="15" cy="15" r="14.300" fill="#0a98da" stroke="#fff" strokeWidth="1.400" /><path d="M9 10.500c.5-6 12.500-6 12 .5-.3 4-5.500 4-5.500 8.500" fill="none" stroke="#fff" strokeWidth="4" /><circle cx="15.300" cy="24" r="2.500" fill="#fff" /></svg>
          <Badge className="top-[3px] left-[26px] size-5 bg-[#ffc40c]" />
        </TaskItem>
        <TaskItem dot>
          <ChromeIcon />
          <Badge className="top-[3px] left-[26px] size-5 bg-[#a142b8] text-[12px] text-[#ecd5f2]">R</Badge>
        </TaskItem>
        <TaskItem dot>
          <svg width="24" height="30" viewBox="0 0 24 30"><rect x="1" y="2" width="22" height="25" rx="1" fill="#5ed2ee" /><path d="M1 25.500h22v2H1z" fill="#f3f3f3" /><path d="M1 27.500h22V30H1z" fill="#a8560e" /><path d="M5 9.500h14M5 14.500h14M5 19.500h14" stroke="#0b6c8f" strokeWidth="1.800" /><path d="M3.500 0v4M7.700 0v4M12 0v4M16.300 0v4M20.500 0v4" stroke="#14627f" strokeWidth="2" /></svg>
        </TaskItem>
        <TaskItem active>
          <ChromeIcon />
          <Badge className="top-[3px] left-[26px] size-5 bg-[#27621b] text-[12px] text-[#cde5c8]">R</Badge>
        </TaskItem>
      </div>
      <svg width="14" height="9" viewBox="0 0 14 9" fill="none" stroke="#fff" strokeWidth="1.800" className="ml-[84px]"><path d="M.8 8L7 1.500 13.200 8" /></svg>
      <svg width="22" height="20" viewBox="0 0 22 20" className="mt-1 ml-[22px]"><path d="M5 14.500A4 4 0 0 1 4.500 6.500 6 6 0 0 1 15 3.500a5 5 0 0 1 2 11z" fill="#8a8a8a" /><path d="M4.500 14.500A4.200 4.200 0 0 1 5 6c4 0 6 4 6 8.500z" fill="#d8d8d8" /><circle cx="15.500" cy="13" r="5.800" fill="#5ac8f8" /><path d="M15.500 12v4.200M15.500 9.400v1.600" stroke="#12303f" strokeWidth="1.500" /></svg>
      <div className="-mt-[2px] ml-[12px] w-[50px] text-center leading-5 tracking-[-0.180px]"><div>ENG</div><div>IN</div></div>
      <svg width="20" height="16" viewBox="0 0 20 16" fill="none" stroke="#fff" strokeWidth="1.400" className="ml-[12px]"><path d="M.7 5.800a13 13 0 0 1 18.600 0M3.600 8.700a9 9 0 0 1 12.800 0M6.400 11.500a5 5 0 0 1 7.200 0" /><circle cx="10" cy="13.800" r="1.700" fill="#fff" stroke="none" /></svg>
      <svg width="21" height="18" viewBox="0 0 21 18" fill="none" stroke="#fff" strokeWidth="1.300" className="ml-[10px]"><path d="M1 6.500h3L8.500 2v14L4 11.500H1z" /><path d="M11.500 6a4.500 4.500 0 0 1 0 6M14 3.800a7.700 7.700 0 0 1 0 10.400M16.700 1.500a11 11 0 0 1 0 15" /></svg>
      <svg width="20" height="18" viewBox="0 0 20 18" fill="none" stroke="#fff" strokeWidth="1.400" className="ml-[9px]"><path d="M10 4h5a2 2 0 0 1 2 2v7a2 2 0 0 1-2 2H4M18.700 7.500v4" strokeWidth="1.600" /><path d="M6.500 0c2.500 3 3.500 7 .8 9.800C5.500 11.500 2 11 1.500 9 1 6 5.500 4 6.500 0z" fill="#fff" stroke="none" /><path d="M1 15L5 8.500" /></svg>
      <div className="-mt-[2px] ml-auto pr-[24px] text-right leading-5"><div className="tracking-[-0.350px]">23:17</div><div className="tracking-[-0.060px]">03-08-2025</div></div>
    </div>
  );
}

export default function App() {
  return (
    <div className="flex h-[1080px] w-[1920px] flex-col overflow-hidden bg-white">
      <TabStrip />
      <AddressBar />
      <div className={`flex h-[911px] ${PLEX}`}>
        <div className="w-[1901px]">
          <Header />
          <Breadcrumb />
          <ViewTabs />
          <div className="flex h-[738px]">
            <div className="w-[1882px]">
              <div className="flex h-[625px] border-b border-[#e0e0e0]">
                <RelationshipPanel />
                <SideTabs />
                <ProgressPanel />
              </div>
              <Leaderboard />
            </div>
            <div className="flex w-[19px] flex-col items-center bg-[#fcfcfc] pb-[4px]">
              <div className="h-[478px] w-[11px] rounded-b-full bg-[#8b8b8b]" />
              <span className="mt-auto"><ArrowDown /></span>
            </div>
          </div>
        </div>
        <div className="flex w-[19px] flex-col items-center bg-[#fcfcfc] pt-[6px] pb-[4px]">
          <ArrowUp />
          <div className="mt-[7px] h-[847px] w-[11px] rounded-full bg-[#8b8b8b]" />
          <span className="mt-auto"><ArrowDown /></span>
        </div>
      </div>
      <Taskbar />
    </div>
  );
}
